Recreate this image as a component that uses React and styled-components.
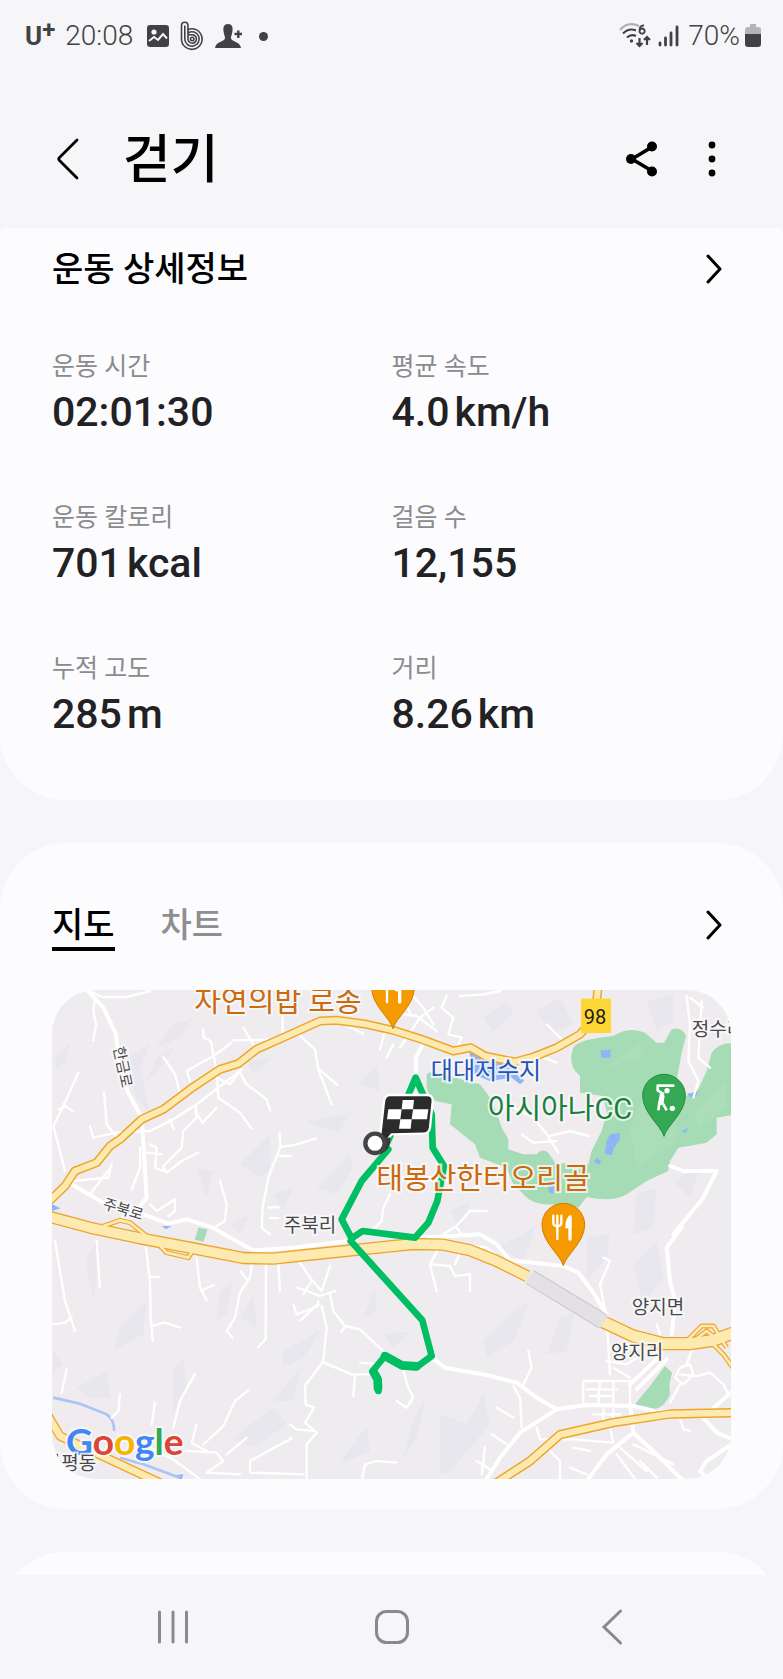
import React from 'react'
import styled, { createGlobalStyle, css } from 'styled-components';

const stats = [
  { label: '운동 시간', value: '02:01:30' },
  { label: '평균 속도', value: '4.0', unit: 'km/h' },
  { label: '운동 칼로리', value: '701', unit: 'kcal' },
  { label: '걸음 수', value: '12,155' },
  { label: '누적 고도', value: '285', unit: 'm' },
  { label: '거리', value: '8.26', unit: 'km' },
];

// x / y are the label centres on the 679 x 489 map
const places = [
  { name: '자연의밥 로송', x: 226, y: 12, kind: 'food' },
  { name: '대대저수지', x: 434, y: 81, kind: 'water' },
  { name: '아시아나CC', x: 508, y: 119, kind: 'park' },
  { name: '태봉산한터오리골', x: 431, y: 189, kind: 'food' },
  { name: '정수리', x: 666, y: 39, kind: 'town' },
  { name: '주북리', x: 258, y: 235, kind: 'town' },
  { name: '양지면', x: 606, y: 317, kind: 'town' },
  { name: '양지리', x: 585, y: 362, kind: 'town' },
  { name: '마평동', x: 18, y: 473, kind: 'town' },
  { name: '한금로', x: 70, y: 77, kind: 'road', turn: 78 },
  { name: '주북로', x: 71, y: 220, kind: 'road', turn: 17 },
];

const highway = 'M20 705 L150 740 L300 772 L450 800 L610 831 L700 833 L800 822 L1050 796 L1120 789 L1210 791 L1290 808 L1370 840 L1462 886';
const highwayEast = 'M1688 1022 L1780 1065 L1870 1088 L1950 1088 L2020 1078 L2090 1052';
const provincial = 'M20 668 L75 615 L105 570 L170 545 L210 495 L240 475 L305 415 L370 385 L450 325 L540 265 L595 248 L650 205 L740 165 L840 120 L890 118 L980 130 L1060 148 L1145 175 L1240 210 L1292 200 L1335 225 L1425 243 L1480 228 L1550 200 L1620 160 L1665 110 L1675 10';
const southRoad = 'M1370 1505 L1470 1440 L1560 1361 L1720 1325 L1890 1299 L2090 1295';
const westRoad = 'M25 1305 L60 1365 L150 1408 L240 1450 L370 1510';
const ramps = 'M190 735 L240 718 L270 725 L320 765 M340 775 L380 815 L445 830 L460 805 M1930 1090 L1985 1035 L2020 1035 L2060 1100 M1960 1080 L2000 1050 L2030 1075 M2010 1080 L2050 1120 L2090 1175';

const bigRoads = [
  'M135 20 L190 80 L228 160 L235 230 L262 330 L305 410 L312 520 L320 650 L300 675',
  'M95 610 L190 665 L310 700 L385 728 L440 715 L520 740 L570 770 L640 808 L760 800 L940 778',
  'M1120 770 L1240 765 L1320 760 L1370 790 L1410 838 L1570 855 L1615 875 L1660 935 L1700 1000',
  'M1175 1130 L1215 1160 L1340 1182 L1430 1205 L1490 1250 L1550 1285 L1640 1272 L1780 1275 L1850 1292 L2010 1290 L2090 1220',
  'M1550 1285 L1440 1355 L1380 1430 L1330 1510',
  'M1770 1270 L1780 1355 L1700 1420 L1640 1500 M1780 1355 L1850 1420 L1930 1500',
  'M1925 740 L1880 800 L1890 900 L1906 960 L1895 1060',
  'M1890 555 L1930 570 L2030 570 L1990 650 L1900 760',
  'M1990 1310 L2030 1355 L2090 1380 L2000 1440 L1980 1470 L2010 1500',
  'M1127 290 L1128 230 L1148 190',
  'M1770 1210 L1860 1125 M1790 1225 L1880 1135',
];

const smallRoads = [
  'M150 30 L185 48 L260 48 L330 30 M165 50 L160 90 L168 130 L160 178',
  'M115 275 L70 375 L40 435 L75 570 M70 370 L98 390 M55 385 L75 378',
  'M192 335 L200 430 L235 475 M150 435 L160 470 L230 455 L330 450 L400 415 L470 370 L600 270',
  'M370 228 L405 280 L418 330 M450 300 L440 270 L520 225 L575 185 M490 145 L490 170 L512 180 L530 270 L535 350 L600 395 L635 443',
  'M580 178 L750 175 M610 140 L640 190 M728 110 L728 160 M780 165 L825 205 L835 265 L875 370 M835 262 L892 312',
  'M600 275 L620 310 L680 355 L690 388 M530 290 L570 310 L605 265',
  'M468 370 L470 410 L430 450 L425 500 L370 555 M465 390 L488 425 L530 380 M390 415 L402 445',
  'M330 490 L350 500 L345 560 L370 570 M320 515 L365 520 M300 500 L300 560 L275 625',
  'M370 560 L380 575 L425 540 L475 515 M215 555 L180 600 L150 640 M100 600 L205 590 L215 550',
  'M540 600 L560 670 L555 720 L530 735 M330 670 L350 690 L405 655 L405 690 L385 705',
  'M718 455 L722 495 L685 590 L668 680 L665 740 L690 760 M722 498 L770 490 L828 472 M718 525 L752 525 M685 680 L715 678 M690 710 L715 712',
  'M1040 130 L1020 205 M905 125 L970 158',
  'M1050 640 L1030 680 L1025 720 L1000 745',
  'M45 780 L75 960 L105 1050 M40 1030 L75 1025 L95 1008 M170 780 L180 920 M318 800 L330 900 L332 1010 L338 1080 M330 888 L358 888 M335 1035 L375 1025 L420 1040',
  'M470 830 L480 920 L500 958 M485 928 L522 912 M635 850 L630 890 L600 935 L585 1010 L560 1050 L578 1070 M602 870 L620 895',
  'M678 850 L677 1075 L655 1098 M715 850 L720 930 M780 845 L810 890 L845 930 L870 855 M770 920 L800 930 L840 945 L885 930 M790 940 L815 900',
  'M835 960 L835 975 L770 1000 L760 970 M832 970 L782 1018 M845 975 L860 1040 L850 1140 L795 1215 L797 1270 L822 1280 L795 1325 L830 1355 L800 1390 L800 1500',
  'M870 940 L880 990 L915 1035 L960 1045 L1035 1115 M915 1035 L905 1052 M852 1145 L935 1180 L990 1180 M945 1180 L940 1245 M960 1145 L1000 1148',
  'M465 1178 L420 1260 L400 1340 M625 1228 L585 1260 L550 1335 L490 1390 M345 1265 L335 1330 M240 1240 L235 1290 L215 1310 M80 1165 L65 1235',
  'M755 1372 L630 1440 L630 1475 L790 1480 M330 1400 L400 1435 L480 1495 M440 1410 L530 1415 L550 1440 L500 1475 L600 1480 M560 1420 L620 1370 M470 1330 L455 1385 L500 1410',
  'M750 1330 L770 1345 L825 1350 M965 1500 L975 1450 L1010 1440 L1070 1445',
  'M1180 80 L1140 110 L1080 200 M1105 30 L1150 80 L1180 130 M1060 95 L1130 105 L1190 150 M1090 45 L1110 95 M1220 45 L1205 80 L1240 110 L1225 160 L1265 170 L1250 200 M1260 45 L1330 40 L1380 30',
  'M1040 230 L1060 190 M1520 130 L1570 180 M1500 225 L1550 245',
  'M1400 370 L1480 410 L1520 460 L1555 515 M1445 460 L1480 485 L1550 480 M1530 465 L1590 450 L1645 465',
  'M1940 45 L1950 130 L1945 240 L1975 300 L1960 350 M1985 60 L1975 230 L2010 260 M1950 50 L1990 80',
  'M1340 690 L1290 690 L1250 735 L1210 760 M1250 740 L1270 765 M1210 775 L1170 850 L1190 930 M1175 850 L1230 855 L1245 885 L1290 880 L1290 930',
  'M1245 850 L1270 790 L1340 800 L1375 830 M1690 830 L1710 840 L1680 910 L1700 1010 L1710 1180 M1710 1100 L1740 1140 M1860 1060 L1850 1030',
  'M1465 1110 L1475 1160 L1445 1220 M1420 1215 L1440 1250 L1445 1340 M1370 1280 L1420 1310 M1090 1170 L1105 1220 L1120 1250 L1100 1280 L1070 1260',
  'M1630 1200 L1770 1200 L1770 1270 M1630 1200 L1630 1265 M1640 1225 L1730 1225 M1680 1200 L1675 1265 M1720 1200 L1720 1265 M1650 1245 L1720 1245',
  'M1700 1140 L1760 1150 L1800 1125 M1720 1160 L1770 1190 M1690 1285 L1690 1325 M1720 1285 L1720 1320 M1660 1300 L1740 1300',
  'M1920 1180 L1970 1185 L2010 1175 L2050 1210 L2065 1240 M1905 1190 L1920 1160 L1950 1150 L1960 1180 L1930 1210 L1905 1190 M1890 1265 L1920 1210 M1940 1150 L1965 1080',
  'M1490 1340 L1500 1375 L1600 1375 L1720 1385 L1710 1340 M1520 1400 L1560 1440 L1560 1500 M1600 1400 L1650 1410 M1590 1460 L1640 1480',
  'M1740 1400 L1820 1470 M1780 1390 L1900 1450 M1730 1420 L1790 1500 M1800 1440 L1850 1490 M1310 1440 L1350 1465 M1335 1400 L1325 1480 M1355 1360 L1400 1390 M1920 1310 L1930 1345 L1950 1350',
];

const hills = [
  'M45 230 L90 185 L75 245 L50 260 Z', 'M260 230 L330 190 L300 260 L330 400 L290 350 L265 290 Z',
  'M400 130 L460 110 L420 170 L350 200 Z', 'M620 240 L700 230 L640 280 Z', 'M800 420 L925 400 L900 450 L840 440 Z',
  'M600 550 L690 460 L690 560 L660 590 Z', 'M830 620 L930 520 L940 560 L890 640 Z', 'M960 310 L1010 250 L1020 330 Z',
  'M320 300 L350 230 L400 200 L370 250 Z', 'M140 830 L170 780 L165 960 L145 900 Z', 'M240 1040 L320 960 L310 1060 L220 1110 Z',
  'M540 930 L580 900 L560 1000 L530 1020 Z', 'M110 1220 L200 1170 L210 1250 L150 1250 Z', 'M400 1160 L430 1130 L440 1210 L400 1300 Z',
  'M730 1110 L840 1050 L790 1130 L730 1160 Z', 'M580 1370 L700 1280 L740 1330 L640 1400 Z', 'M930 1400 L980 1340 L990 1410 L900 1450 Z',
  'M700 1260 L780 1160 L760 1260 Z', 'M970 1010 L1005 920 L1010 990 Z', 'M1200 1300 L1280 1330 L1330 1240 L1350 1330 L1230 1470 L1200 1480 Z',
  'M1330 1080 L1420 990 L1470 960 L1420 1080 L1340 1130 Z', 'M1520 1120 L1560 1010 L1600 1000 L1580 1110 Z', 'M1640 770 L1710 760 L1700 830 L1640 900 Z',
  'M1370 800 L1450 760 L1490 730 L1450 840 Z', 'M1780 850 L1850 780 L1870 890 L1810 970 Z', 'M1120 1320 L1160 1240 L1130 1370 L1090 1430 Z',
  'M1330 110 L1400 60 L1420 100 L1360 150 Z', 'M1490 90 L1560 50 L1600 130 L1530 160 Z', 'M1820 60 L1900 40 L1900 120 L1850 150 Z',
  'M1790 640 L1850 620 L1840 740 L1780 760 Z', 'M1900 600 L1980 560 L1950 650 Z', 'M1230 690 L1290 660 L1260 740 Z', 'M1030 1060 L1110 1050 L1060 1100 Z',
  'M40 1110 L70 1150 L40 1170 Z', 'M470 560 L520 570 L500 650 Z', 'M700 640 L760 620 L730 690 Z', 'M630 700 L600 760 L570 730 Z', 'M600 1010 L640 940 L650 1040 Z',
];

function FoodPin({ x, y }) {
  return (
    <g transform={`translate(${x} ${y})`}>
      <path d="M0 0 C-8 -32 -64 -70 -64 -123 A64 64 0 0 1 64 -123 C64 -70 8 -32 0 0 Z" fill="#f59b00" stroke="#d17f00" strokeWidth="3" />
      <g stroke="#fff" strokeWidth="7" strokeLinecap="round" fill="none">
        <path d="M-30 -150 V-130 Q-30 -118 -18 -118 Q-6 -118 -6 -130 V-150 M-18 -150 V-80" />
        <path d="M20 -146 V-80" strokeWidth="10" />
      </g>
      <path d="M24 -152 Q4 -146 6 -112 H24 Z" fill="#fff" />
    </g>
  )
}

function MapDrawing() {
  return (
    <svg viewBox="36 27 2037 1467" width="100%" height="100%" preserveAspectRatio="none" aria-hidden="true">
      <rect x="36" y="27" width="2037" height="1467" fill="#efecef" />
      <g fill="#e2e4ec" opacity=".6">
        {hills.map((d) => <path key={d} d={d} />)}
      </g>
      {/* parks */}
      <g fill="#a5dbb5">
        <path d="M1160 280 Q1175 260 1245 290 L1320 310 L1350 350 L1372 400 L1385 440 L1405 475 L1405 505 L1450 520 L1490 520 Q1505 500 1525 515 L1545 545 L1645 550 L1655 510 L1685 450 L1700 395 L1690 345 L1620 335 L1620 285 Q1580 250 1600 200 Q1615 175 1720 165 Q1765 135 1815 155 L1850 185 L1872 185 L1895 145 Q1925 135 1938 165 L1925 215 L1910 300 L1940 345 L1975 325 L2000 270 L2015 215 Q2040 180 2090 188 L2090 400 L2030 410 L2030 460 L2000 485 L1915 500 L1890 540 L1885 570 L1820 600 L1760 640 Q1720 665 1640 648 L1615 680 L1540 670 Q1480 675 1450 640 L1420 610 L1400 560 L1320 530 L1305 490 L1230 430 L1235 370 L1185 360 Q1160 340 1160 310 Z" />
        <path d="M475 740 L503 745 L490 782 L464 776 Z" />
        <path d="M1875 1155 L1896 1175 L1888 1210 L1890 1240 Q1870 1285 1840 1283 L1785 1270 L1830 1215 Z" />
      </g>
      <g fill="#b0dfbc" opacity=".5">
        <path d="M1700 260 L1800 180 L1815 230 Z M1800 360 L1900 340 L1910 480 L1790 560 L1770 450 Z M1960 400 L2060 300 L2060 380 L1980 440 Z" />
      </g>
      {/* water */}
      <g fill="#8fb5f7">
        <path d="M1288 214 L1325 228 L1400 240 L1430 265 L1452 300 L1440 310 L1415 290 L1350 300 L1300 280 Z" />
        <path d="M1682 208 L1712 206 L1710 231 L1684 230 Z M1710 460 L1738 455 L1740 475 L1722 500 L1715 523 L1694 518 L1700 480 Z M1668 530 L1684 540 L1678 550 L1662 545 Z M1925 450 L1945 440 L1935 457 Z M1940 338 L1976 332 L1960 355 Z" />
        <path d="M36 670 L62 682 L36 690 Z M365 735 L395 735 L378 745 Z M410 1482 L430 1480 L425 1495 L412 1492 Z M1525 605 L1542 600 L1540 640 L1526 632 Z" />
      </g>
      <path d="M40 1250 L120 1268 L200 1300 Q225 1320 222 1350 M240 1430 L310 1450 L420 1490" fill="none" stroke="#a9c4f5" strokeWidth="8" />

      <g fill="none" stroke="#fff" strokeLinejoin="round" strokeLinecap="round">
        {smallRoads.map((d) => <path key={d} d={d} strokeWidth="7" />)}
        {bigRoads.map((d) => <path key={d} d={d} strokeWidth="12" />)}
      </g>

      {/* main roads: casing first, fill on top */}
      <g fill="none" stroke="#eda62c" strokeLinejoin="round">
        <path d={provincial} strokeWidth="27" />
        <path d={southRoad} strokeWidth="28" />
        <path d={westRoad} strokeWidth="28" />
        <path d={ramps} strokeWidth="15" />
        <path d={highway} strokeWidth="37" />
        <path d={highwayEast} strokeWidth="40" />
      </g>
      <g fill="none" stroke="#fdeab0" strokeLinejoin="round">
        <path d={provincial} strokeWidth="18" />
        <path d={southRoad} strokeWidth="19" />
        <path d={westRoad} strokeWidth="20" />
        <path d={ramps} strokeWidth="8" />
        <path d={highway} strokeWidth="29" />
        <path d={highwayEast} strokeWidth="32" />
      </g>
      <path d="M1470 888 L1690 1022" stroke="#c6c5c8" strokeWidth="48" fill="none" />
      <path d="M1468 887 L1692 1023" stroke="#e3e1e4" strokeWidth="42" fill="none" />

      <rect x="1623" y="53" width="90" height="103" fill="#fdd835" />

      {/* walked route */}
      <g fill="none" stroke="#00bf63" strokeWidth="20" strokeLinejoin="round" strokeLinecap="round">
        <path d="M1045 505 L965 600 L905 715 L935 772 L968 750 L1125 770 L1165 725 L1192 660 L1212 555 L1178 500 L1175 400 L1127 290 L1080 400 L1030 510" />
        <path d="M932 780 L1147 1018 L1175 1125 L1130 1158 L1085 1155 L1035 1125 L998 1170 L1012 1195 L1015 1230" />
        <path d="M1035 1125 L1085 1153 L1130 1156 M1000 1172 L1013 1195 L1014 1222" strokeWidth="26" />
      </g>

      {/* start / finish flag */}
      <g>
        <path d="M1050 342 H1160 Q1180 342 1178 362 L1170 440 Q1167 458 1150 458 L1055 460 L1035 485 L1020 470 L1032 362 Q1034 342 1050 342 Z" fill="#2b2b2b" stroke="#fff" strokeWidth="7" strokeLinejoin="round" />
        <g fill="#fff">
          <path d="M1088 357 H1122 L1119 385 H1085 Z M1045 385 H1085 L1081 415 H1041 Z M1119 385 H1165 L1161 415 H1115 Z M1081 415 H1115 L1112 443 H1077 Z" />
        </g>
        <path d="M1020 512 Q1045 500 1043 470" fill="none" stroke="#3a3a3a" strokeWidth="16" />
        <circle cx="1005" cy="487" r="29" fill="#fff" stroke="#444345" strokeWidth="13" />
      </g>

      <FoodPin x={1059} y={143} />
      <FoodPin x={1570} y={854} />
      <g transform="translate(1872 466)">
        <path d="M0 0 C-8 -32 -64 -70 -64 -122 A64 64 0 0 1 64 -122 C64 -70 8 -32 0 0 Z" fill="#34a853" stroke="#1e8e3e" strokeWidth="3" />
        <g fill="none" stroke="#fff" strokeWidth="8" strokeLinejoin="round">
          <path d="M31 -152 H-19 V-138 L0 -126 M-4 -122 L-14 -100 L-2 -96 L8 -78 M-14 -100 L-17 -78" />
        </g>
        <path d="M-12 -130 L2 -122 L-2 -94 L-18 -98 Z" fill="#fff" />
        <circle cx="9" cy="-137" r="8" fill="#fff" />
        <circle cx="25" cy="-84" r="8" fill="#fff" />
      </g>
    </svg>
  )
}

function Chevron() {
  return (
    <svg width="18" height="30" viewBox="0 0 18 30" fill="none" stroke="#000" strokeWidth="3" strokeLinecap="round" strokeLinejoin="round" aria-hidden="true">
      <path d="M3 2 L15 15 L3 28" />
    </svg>
  )
}

export default function App() {
  return (
    <Screen>
      <GlobalStyle />
      <StatusBar>
        <StatusGroup $gap={10}>
          <Carrier>U<sup>+</sup></Carrier>
          <StatusText>20:08</StatusText>
          <StatusIcons>
            <svg width="24" height="24" viewBox="0 0 24 24" aria-hidden="true">
              <rect x="1" y="1" width="22" height="22" rx="3" fill="#424244" />
              <circle cx="8" cy="8" r="2.600" fill="#f6f6f8" />
              <path d="M3 17 L8 13 L12 16 L17 10 L21 14.500" stroke="#f6f6f8" strokeWidth="2" fill="none" />
            </svg>
            <svg width="24" height="30" viewBox="0 0 24 30" fill="none" stroke="#424244" strokeWidth="1.600" aria-hidden="true">
              <path d="M1.500 4.500 A3.200 3.200 0 0 1 8 4.500 V8.500 A10.300 10.300 0 1 1 1.500 18 Z" />
              <path d="M4.800 4.500 V18 A7.200 7.200 0 1 0 8 12" />
              <path d="M8 8 V18 A4.200 4.200 0 1 0 12 13.800 H8" />
              <circle cx="12.200" cy="18" r="1.700" />
            </svg>
            <svg width="28" height="26" viewBox="0 0 28 26" fill="#424244" aria-hidden="true">
              <path d="M14 1 C18 1 19 4 18.500 8 C18 12 17 13 17 15 C17 19 26 18 27 25 H1 C2 18 11 19 11 15 C11 13 10 12 9.500 8 C9 4 10 1 14 1 Z" />
              <path d="M20.500 11 H28 M24.300 7.500 V15" stroke="#424244" strokeWidth="2.400" />
            </svg>
            <Dot />
          </StatusIcons>
        </StatusGroup>
        <StatusGroup $gap={6}>
          <svg width="32" height="28" viewBox="0 0 32 28" fill="none" strokeWidth="2.200" aria-hidden="true">
            <path d="M1 8 Q9 -1 20 4" stroke="#b0b0b2" />
            <path d="M4 11.500 Q10 5.500 17 8.500 M8 15.500 Q12 11.500 17 14" stroke="#424244" />
            <circle cx="12.500" cy="19" r="1.700" fill="#424244" />
            <path d="M25 3.500 Q20.500 3 20.500 9 A2.600 2.600 0 1 0 23 6.500 Q21 6.500 20.500 9" stroke="#424244" strokeWidth="1.900" />
            <path d="M20.500 16 V24 M17.500 21 L20.500 24 L23.500 21 M28 23 V15 M25 18 L28 15 L31 18" stroke="#424244" />
          </svg>
          <svg width="22" height="22" viewBox="0 0 22 22" fill="none" stroke="#424244" strokeWidth="2.800" strokeLinecap="round" aria-hidden="true">
            <path d="M3 18 V20 M8.500 13 V20 M14 8 V20 M20 2 V20" />
          </svg>
          <StatusText $push>70%</StatusText>
          <svg width="16" height="24" viewBox="0 0 16 24" aria-hidden="true">
            <path d="M5 0 H11 V3 H13 Q16 3 16 6 V11 H0 V6 Q0 3 3 3 H5 Z" fill="#b4b4b6" />
            <path d="M0 10 H16 V20 Q16 23 13 23 H3 Q0 23 0 20 Z" fill="#424244" />
          </svg>
        </StatusGroup>
      </StatusBar>

      <AppBar>
        <IconButton aria-label="뒤로">
          <svg width="24" height="42" viewBox="0 0 24 42" fill="none" stroke="#000" strokeWidth="2.800" strokeLinecap="round" strokeLinejoin="round">
            <path d="M21 2 L3.500 19.500 Q2 21 3.500 22.500 L21 40" />
          </svg>
        </IconButton>
        <Title>걷기</Title>
        <Actions>
          <IconButton aria-label="공유">
            <svg width="34" height="38" viewBox="0 0 34 38">
              <path d="M27 7 L7 19 L27 31" fill="none" stroke="#000" strokeWidth="3.600" />
              <circle cx="27" cy="6.500" r="5" /><circle cx="6" cy="19" r="5" /><circle cx="27" cy="31.500" r="5" />
            </svg>
          </IconButton>
          <IconButton aria-label="옵션 더보기">
            <svg width="8" height="38" viewBox="0 0 8 38">
              <circle cx="4" cy="5" r="3.400" /><circle cx="4" cy="19" r="3.400" /><circle cx="4" cy="33" r="3.400" />
            </svg>
          </IconButton>
        </Actions>
      </AppBar>

      <Content>
        <Card $first>
          <CardHead>
            <CardTitle>운동 상세정보</CardTitle>
            <IconButton aria-label="운동 상세정보 열기"><Chevron /></IconButton>
          </CardHead>
          <StatGrid>
            {stats.map(({ label, value, unit }) => (
              <div key={label}>
                <StatLabel>{label}</StatLabel>
                <StatValue>{value}{unit && <Unit>{unit}</Unit>}</StatValue>
              </div>
            ))}
          </StatGrid>
        </Card>

        <Card>
          <CardHead>
            <Tabs role="tablist">
              <Tab role="tab" aria-selected="true" $active>지도</Tab>
              <Tab role="tab" aria-selected="false">차트</Tab>
            </Tabs>
            <IconButton aria-label="지도 열기"><Chevron /></IconButton>
          </CardHead>
          <MapBox>
            <MapDrawing />
            <Google>
              <Letter $c="#4285f4">G</Letter><Letter $c="#db4437">o</Letter><Letter $c="#f4b400">o</Letter>
              <Letter $c="#4285f4">g</Letter><Letter $c="#34a853">l</Letter><Letter $c="#db4437">e</Letter>
            </Google>
            {places.map((p) => (
              <Place key={p.name} $x={p.x} $y={p.y} $kind={p.kind} $turn={p.turn}>{p.name}</Place>
            ))}
            <Place $x={543} $y={27} $kind="shield">98</Place>
          </MapBox>
        </Card>

        <Card $empty />
      </Content>

      <NavBar>
        <IconButton aria-label="최근 앱">
          <svg width="34" height="36" viewBox="0 0 34 36" stroke="#8a8a8c" strokeWidth="3" strokeLinecap="round">
            <path d="M3.500 3 V33 M17 3 V33 M30.500 3 V33" />
          </svg>
        </IconButton>
        <IconButton aria-label="홈">
          <svg width="36" height="36" viewBox="0 0 36 36" fill="none" stroke="#8a8a8c" strokeWidth="3">
            <rect x="2.500" y="2.500" width="31" height="31" rx="10" />
          </svg>
        </IconButton>
        <IconButton aria-label="뒤로 가기">
          <svg width="22" height="38" viewBox="0 0 22 38" fill="none" stroke="#8a8a8c" strokeWidth="3" strokeLinecap="round">
            <path d="M19.500 3 L3 19 L19.500 35" />
          </svg>
        </IconButton>
      </NavBar>
    </Screen>
  )
}

const GlobalStyle = createGlobalStyle`
  * {
    box-sizing: border-box;
  }
  body {
    margin: 0;
    background: #f6f6f8;
    font-family: Roboto, "Noto Sans CJK KR", sans-serif;
    color: #000;
  }
  svg {
    display: block;
    flex: none;
  }
`

const Screen = styled.div`
  display: flex;
  flex-direction: column;
  height: 100vh;
  overflow: hidden;
`

const StatusBar = styled.div`
  display: flex;
  justify-content: space-between;
  align-items: center;
  flex: none;
  height: 72px;
  padding: 0 22px 0 25px;
  color: #424244;
`

const StatusGroup = styled.div`
  display: flex;
  align-items: center;
  gap: ${({ $gap }) => $gap}px;
`

const Carrier = styled.span`
  display: flex;
  font-size: 26px;
  font-weight: 700;
  line-height: 32px;
  sup {
    font-size: 24px;
    line-height: 20px;
  }
`

const StatusText = styled.span`
  font-size: 28px;
  font-weight: 300;
  line-height: 32px;
  margin-left: ${({ $push }) => ($push ? 3 : 0)}px;
  margin-right: ${({ $push }) => ($push ? -1 : 0)}px;
`

const StatusIcons = styled.div`
  display: flex;
  align-items: center;
  gap: 10px;
  margin-left: 3px;
`

const Dot = styled.i`
  width: 9px;
  height: 9px;
  margin-left: 7px;
  border-radius: 50%;
  background: #424244;
`

const AppBar = styled.header`
  display: flex;
  align-items: center;
  flex: none;
  height: 156px;
  padding: 18px 67px 0 56px;
`

const Title = styled.h1`
  margin: 0 0 0 43px;
  padding-top: 4px;
  font-size: 52px;
  font-weight: 500;
  line-height: 72px;
`

const Actions = styled.div`
  display: flex;
  gap: 49px;
  margin-left: auto;
`

const IconButton = styled.button`
  display: flex;
  align-items: center;
  justify-content: center;
  padding: 0;
  border: 0;
  background: none;
`

const Content = styled.main`
  flex: 1;
  min-height: 0;
  overflow: hidden;
`

const Card = styled.section`
  margin-bottom: 43px;
  padding: 60px 52px 30px;
  border-radius: 66px;
  background: #fcfcfe;
  ${({ $first }) => $first && css`
    padding: 15px 52px 60px;
    border-radius: 6px 6px 66px 66px;
  `}
  ${({ $empty }) => $empty && css`
    min-height: 200px;
  `}
`

const CardHead = styled.div`
  display: flex;
  justify-content: space-between;
  align-items: center;
  padding-right: 8px;
`

const CardTitle = styled.h2`
  margin: 0;
  font-size: 34px;
  font-weight: 500;
  line-height: 52px;
`

const StatGrid = styled.div`
  display: grid;
  grid-template-columns: 1fr 1fr;
  row-gap: 63px;
  margin-top: 55px;
`

const StatLabel = styled.div`
  margin-bottom: 3px;
  font-size: 25px;
  line-height: 34px;
  color: #8b8b8d;
`

const StatValue = styled.div`
  font-size: 41px;
  font-weight: 500;
  line-height: 51px;
  color: #222224;
`

const Unit = styled.span`
  margin-left: 5px;
`

const Tabs = styled.div`
  display: flex;
  gap: 46px;
`

const Tab = styled.button`
  padding: 0;
  border: 0;
  background: none;
  box-shadow: ${({ $active }) => ($active ? '0 4px 0 #000' : 'none')};
  font-family: inherit;
  font-size: 34px;
  font-weight: 500;
  line-height: 44px;
  color: ${({ $active }) => ($active ? '#000' : '#8e8e90')};
`

const MapBox = styled.div`
  position: relative;
  margin-top: 43px;
  aspect-ratio: 679 / 489;
  overflow: hidden;
  border-radius: 44px;
`

const kinds = {
  food: css`font-size: 29px; color: #cb6a0c;`,
  park: css`font-size: 29px; color: #18803c;`,
  water: css`font-size: 24px; color: #2156b8;`,
  town: css`font-size: 19px; color: #48484c;`,
  road: css`font-size: 15px; color: #48484c;`,
  shield: css`font-size: 20px; color: #1c1c1c; -webkit-text-stroke: 0;`,
}

const Place = styled.span`
  position: absolute;
  left: ${({ $x }) => ($x / 679) * 100}%;
  top: ${({ $y }) => ($y / 489) * 100}%;
  transform: translate(-50%, -50%) rotate(${({ $turn }) => $turn || 0}deg);
  white-space: nowrap;
  line-height: 1;
  -webkit-text-stroke: 4px rgba(250, 250, 250, 0.8);
  paint-order: stroke fill;
  ${({ $kind }) => kinds[$kind]}
`

const Google = styled.span`
  position: absolute;
  left: 14px;
  bottom: 15px;
  font-family: Lato, sans-serif;
  font-size: 37px;
  font-weight: 700;
  line-height: 46px;
  -webkit-text-stroke: 4px rgba(250, 250, 250, 0.8);
  paint-order: stroke fill;
`

const Letter = styled.span`
  color: ${({ $c }) => $c};
`

const NavBar = styled.nav`
  display: grid;
  grid-template-columns: repeat(3, 1fr);
  align-items: center;
  flex: none;
  height: 104px;
  padding: 0 61px 0 63px;
`
